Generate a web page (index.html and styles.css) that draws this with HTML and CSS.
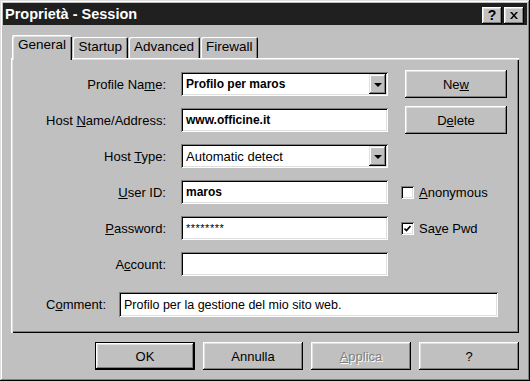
FILE: index.html
```html
<!DOCTYPE html>
<html lang="it">
<head>
    <meta charset="UTF-8">
    <title>Proprietà - Session</title>
    <link rel="stylesheet" href="styles.css">
</head>
<body>
    <div class="window">
        <div class="titlebar">
            <span class="title">Proprietà - Session</span>
            <div class="title-buttons">
                <span class="tbtn help">?</span>
                <span class="tbtn close">
                    <svg width="8" height="7" viewBox="0 0 8 7"><path d="M0 0h2l2 2.5L6 0h2L5 3.5 8 7H6L4 4.5 2 7H0l3-3.5z" fill="#000"/></svg>
                </span>
            </div>
        </div>

        <div class="content">
            <div class="tabs">
                <span class="tab active">General</span>
                <span class="tab">Startup</span>
                <span class="tab">Advanced</span>
                <span class="tab">Firewall</span>
            </div>

            <div class="panel">
                <div class="form">
                    <label class="lbl">Profile Na<u>m</u>e:</label>
                    <div class="field select bold"><span>Profilo per maros</span><span class="arrow"></span></div>
                    <div class="side"><button class="btn side-btn">Ne<u>w</u></button></div>

                    <label class="lbl">Host <u>N</u>ame/Address:</label>
                    <div class="field bold">www.officine.it</div>
                    <div class="side"><button class="btn side-btn">D<u>e</u>lete</button></div>

                    <label class="lbl">Host <u>T</u>ype:</label>
                    <div class="field select"><span>Automatic detect</span><span class="arrow"></span></div>
                    <div class="side"></div>

                    <label class="lbl"><u>U</u>ser ID:</label>
                    <div class="field bold">maros</div>
                    <div class="side">
                        <span class="check"><span class="box"></span><span><u>A</u>nonymous</span></span>
                    </div>

                    <label class="lbl"><u>P</u>assword:</label>
                    <div class="field pwd">********</div>
                    <div class="side">
                        <span class="check">
                            <span class="box"><svg width="7" height="7" viewBox="0 0 7 7"><path d="M0.5 3.5l2 2 4-4.5" stroke="#000" stroke-width="1.6" fill="none"/></svg></span>
                            <span>Sa<u>v</u>e Pwd</span>
                        </span>
                    </div>

                    <label class="lbl">A<u>c</u>count:</label>
                    <div class="field"></div>
                    <div class="side"></div>
                </div>

                <div class="comment-row">
                    <label class="lbl comment-lbl">C<u>o</u>mment:</label>
                    <div class="field comment">Profilo per la gestione del mio sito web.</div>
                </div>
            </div>

            <div class="actions">
                <button class="btn default">OK</button>
                <button class="btn">Annulla</button>
                <button class="btn disabled"><u>A</u>pplica</button>
                <button class="btn">?</button>
            </div>
        </div>
    </div>
</body>
</html>
```

FILE: styles.css
```css
* {
    margin: 0;
    padding: 0;
    box-sizing: border-box;
}

body {
    background: #c0c0c0;
    font-family: 'Liberation Sans', Arial, sans-serif;
    font-size: 13px;
    color: #000;
}

.window {
    width: 530px;
    height: 381px;
    background: #c0c0c0;
    padding: 3px;
    display: flex;
    flex-direction: column;
    box-shadow: inset -1px -1px #000, inset 1px 1px #dfdfdf,
                inset -2px -2px #808080, inset 2px 2px #fff;
}

/* title bar */
.titlebar {
    height: 22px;
    background: #202020;
    color: #fff;
    display: flex;
    align-items: center;
    justify-content: space-between;
    padding: 0 3px 0 2px;
}

.title {
    font-weight: bold;
    font-size: 14.5px;
}

.title-buttons {
    display: flex;
    gap: 2px;
    margin-top: 2px;
}

.tbtn {
    width: 20px;
    height: 17px;
    background: #c0c0c0;
    color: #000;
    display: flex;
    align-items: center;
    justify-content: center;
    font-weight: bold;
    font-size: 14px;
    box-shadow: inset -1px -1px #000, inset 1px 1px #fff,
                inset -2px -2px #808080, inset 2px 2px #dfdfdf;
}

.content {
    flex: 1;
    padding: 10px 8px 0 8px;
}

/* tabs */
.tabs {
    display: flex;
    align-items: flex-end;
    height: 23px;
    padding-left: 1px;
}

.tab {
    height: 21px;
    line-height: 20px;
    font-size: 13.5px;
    padding: 0 5.5px;
    margin-right: 1px;
    border-radius: 2px 2px 0 0;
    box-shadow: inset 1px 1px #fff, inset -1px 0 #000, inset -2px 0 #808080;
}

.tab.active {
    position: relative;
    z-index: 1;
    height: 25px;
    margin-bottom: -2px;
    padding: 0 6px 2px 6px;
    background: #c0c0c0;
    box-shadow: inset 1px 1px #fff, inset 2px 2px #dfdfdf, inset -1px 0 #000, inset -2px 0 #808080;
}

/* tab page */
.panel {
    height: 275px;
    padding: 14px 2px 0 2px;
    box-shadow: inset 1px 1px #fff, inset 2px 2px #dfdfdf,
                inset -1px -1px #000, inset -2px -2px #808080;
}

.form {
    display: grid;
    grid-template-columns: 153px 207px 1fr;
    column-gap: 15px;
    row-gap: 12px;
    grid-auto-rows: 24px;
    align-items: center;
}

.lbl {
    text-align: right;
    white-space: nowrap;
}

.field {
    height: 24px;
    background: #fff;
    padding: 0 3px 0 5px;
    display: flex;
    align-items: center;
    white-space: nowrap;
    overflow: hidden;
    box-shadow: inset 1px 1px #808080, inset -1px -1px #fff,
                inset 2px 2px #000, inset -2px -2px #dfdfdf;
}

.bold {
    font-weight: bold;
    font-size: 12px;
}

.pwd {
    font-size: 11px;
    letter-spacing: 0.5px;
}

.select {
    justify-content: space-between;
    padding-right: 2px;
}

.arrow {
    width: 17px;
    height: 20px;
    background: #c0c0c0;
    display: flex;
    align-items: center;
    justify-content: center;
    box-shadow: inset -1px -1px #000, inset 1px 1px #dfdfdf,
                inset -2px -2px #808080, inset 2px 2px #fff;
}

.arrow::after {
    content: '';
    border-left: 4px solid transparent;
    border-right: 4px solid transparent;
    border-top: 4px solid #000;
    margin-top: 1px;
}

.side {
    margin-left: -2px;
}

.side-btn {
    width: 102px;
    height: 28px;
    margin: -2px 0 -2px 4px;
}

.check {
    display: flex;
    align-items: center;
    gap: 5px;
}

.box {
    width: 13px;
    height: 13px;
    background: #fff;
    display: flex;
    align-items: center;
    justify-content: center;
    box-shadow: inset 1px 1px #808080, inset -1px -1px #fff,
                inset 2px 2px #000, inset -2px -2px #dfdfdf;
}

.comment-row {
    display: flex;
    align-items: center;
    gap: 13px;
    margin-top: 16px;
}

.comment-lbl {
    width: 93px;
}

.comment {
    width: 379px;
    height: 25px;
    font-size: 12.5px;
}

/* buttons */
.btn {
    font-family: inherit;
    font-size: 13px;
    color: #000;
    background: #c0c0c0;
    border: none;
    box-shadow: inset -1px -1px #000, inset 1px 1px #fff,
                inset -2px -2px #808080, inset 2px 2px #dfdfdf;
}

.actions {
    display: flex;
    justify-content: flex-end;
    gap: 8px;
    margin-top: 9px;
}

.actions .btn {
    width: 100px;
    height: 28px;
}

.btn.default {
    box-shadow: inset -1px -1px #000, inset 1px 1px #000,
                inset -2px -2px #000, inset 2px 2px #fff,
                inset -3px -3px #808080, inset 3px 3px #dfdfdf;
}

.btn.disabled {
    color: #808080;
    text-shadow: 1px 1px #fff;
}
```
